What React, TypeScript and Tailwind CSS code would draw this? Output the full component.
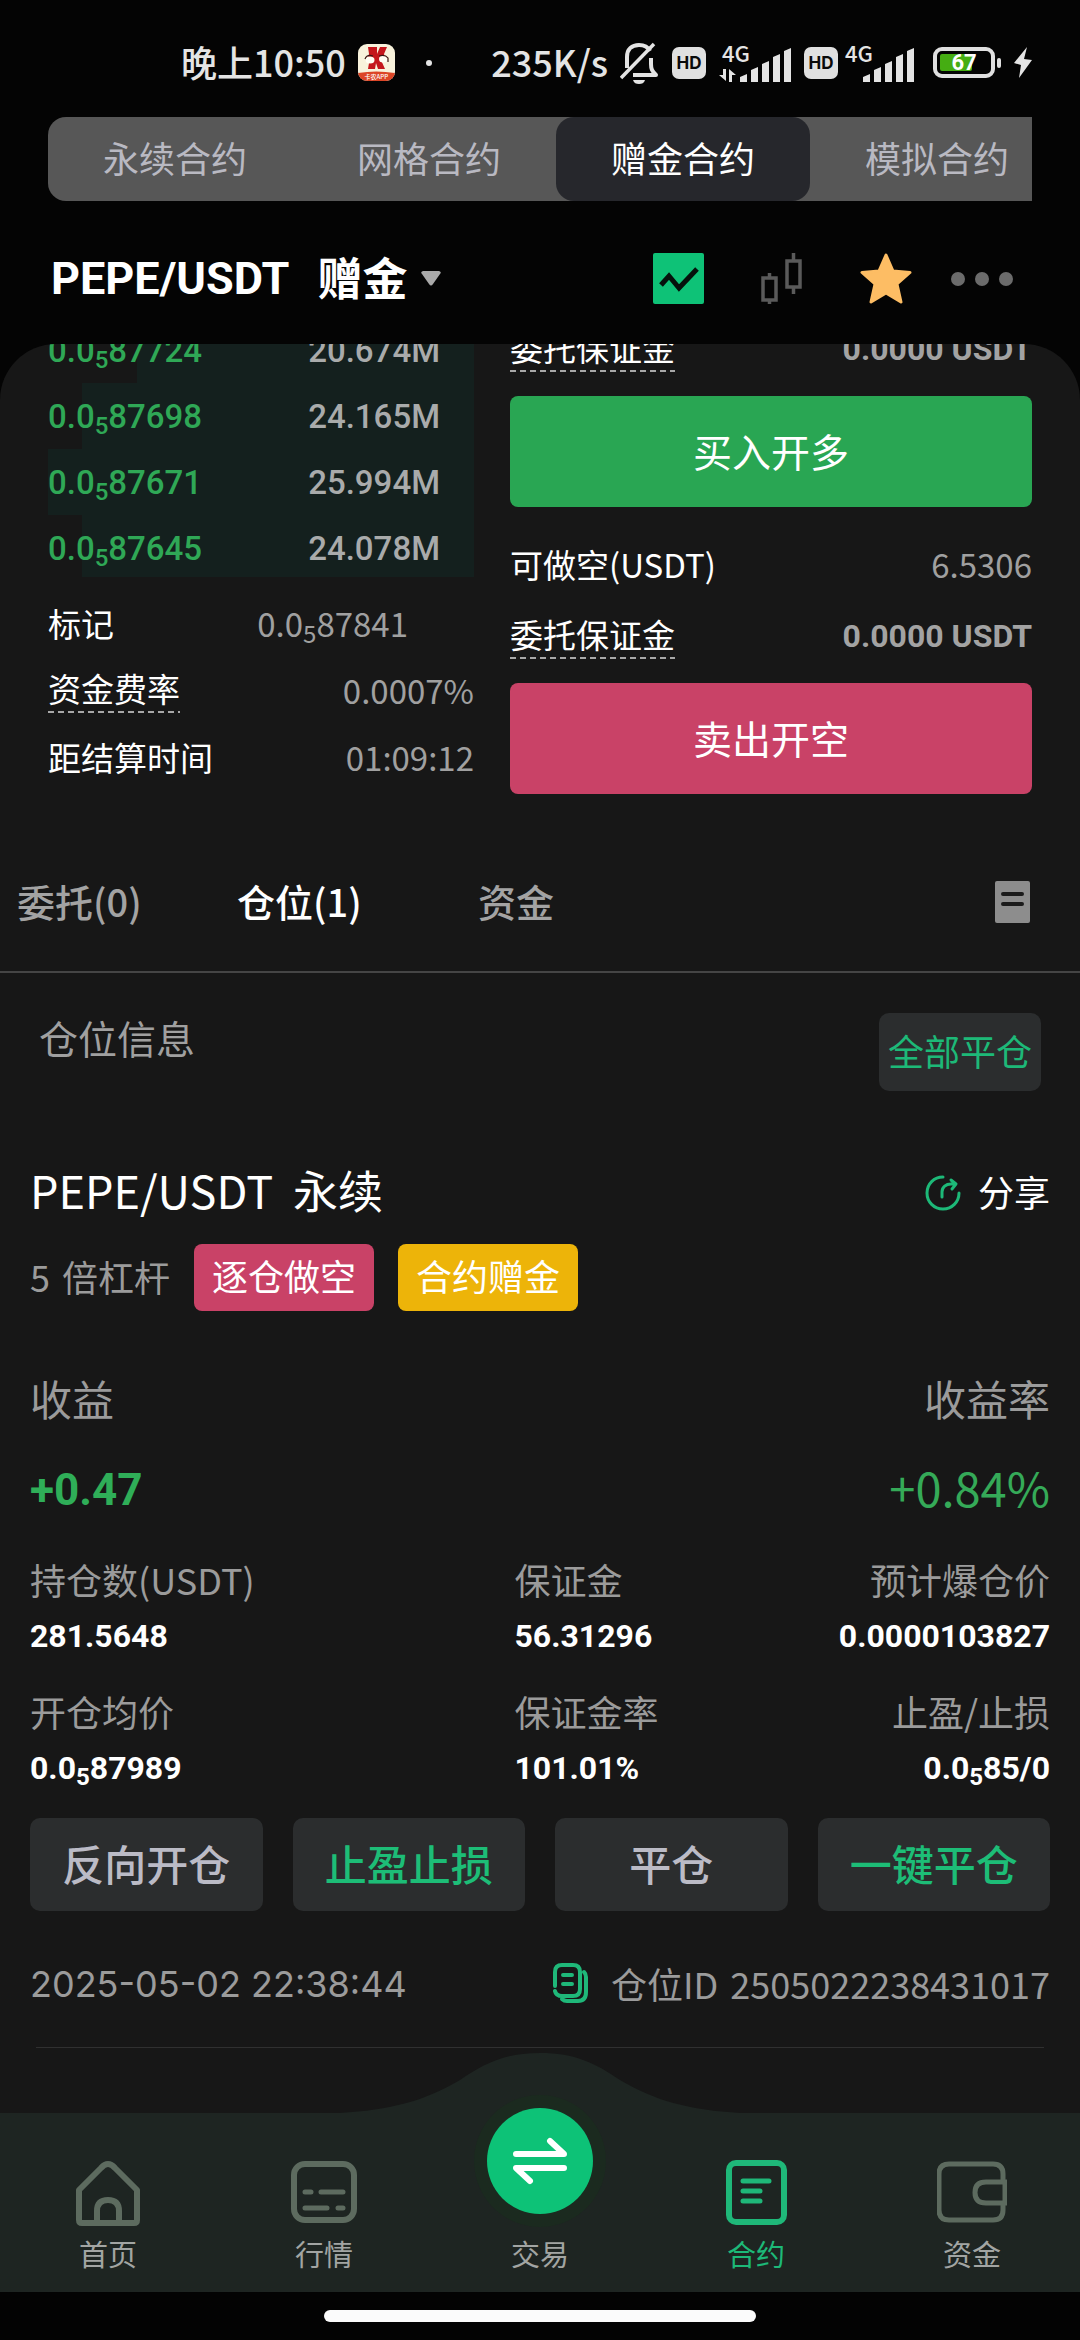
import type { ReactNode } from "react";

const NUM = "font-[Roboto,'Noto_Sans_CJK_SC',sans-serif]";

function SubPrice({ tail }: { tail: string }) {
  return (
    <>
      0.0<sub className="text-[24px]">5</sub>
      {tail}
    </>
  );
}

/* ---------- status bar ---------- */

function AppBadge() {
  return (
    <span className="relative block h-[37px] w-[37px] overflow-hidden rounded-[9px] bg-[#f8f2dc]">
      <svg viewBox="0 0 37 37" className="block h-full w-full" aria-hidden="true">
        <path d="M10 3h9v7l3-7h7l-3 7 1 4-4 2 4 9h-7l-2-6-1 6h-7l1-6-1-5 1-4z" fill="#c4161c" />
        <ellipse cx="12" cy="16" rx="4.500" ry="3.500" fill="#fffdf3" />
        <ellipse cx="25" cy="15" rx="4" ry="3.500" fill="#fffdf3" />
        <path d="M7 15q2-5 8-3M21 12q6-2 9 2v4" stroke="#3a1512" strokeWidth="1.200" fill="none" />
        <path d="M0 29q18-3 37 0v8H0z" fill="#dc4526" />
      </svg>
      <span className="absolute inset-x-0 bottom-0 text-center text-[6px] leading-[9px] text-white">卡农APP</span>
    </span>
  );
}

function BellOff() {
  return (
    <svg viewBox="0 0 38 42" className="h-[42px] w-[38px]" fill="none" stroke="#e4e4e4" strokeWidth="4" strokeLinejoin="round" aria-hidden="true">
      <path d="M7 26V15C7 7 12 3 19 3c5 0 9 2 11 6" />
      <path d="M13 33h23c-4-4-5-6-5-11v-6" />
      <path d="M1 36 34 2" strokeWidth="3.5" />
      <path d="M13 38h12c-1 3-3 4-6 4s-5-1-6-4z" fill="#e4e4e4" stroke="none" />
    </svg>
  );
}

function HdBadge() {
  return (
    <span className="flex h-[32px] w-[34px] items-center justify-center rounded-[7px] bg-[#e0e0e0] font-[Inter,sans-serif] text-[17px] font-bold text-[#0a0a0a]">
      HD
    </span>
  );
}

function Signal({ data }: { data?: boolean }) {
  return data ? (
    <span className="relative block h-[38px] w-[72px]">
      <svg viewBox="0 0 72 38" className="h-full w-full" fill="#e4e4e4" aria-hidden="true">
        <path d="M4 25h3v12L0 31h4zM10 38V25l7 6h-4v7z" />
        <path d="M21 38v-5l7-3v8zM32 38V26l7-3v15zM43 38V20l7-3v21zM54 38V13l7-3v28zM65 38V7l7-3v34z" />
      </svg>
      <span className="absolute left-[3px] top-[-3px] text-[22px] leading-[22px] font-medium">4G</span>
    </span>
  ) : (
    <span className="relative block h-[38px] w-[69px]">
      <svg viewBox="0 0 69 38" className="h-full w-full" fill="#e4e4e4" aria-hidden="true">
        <path d="M18 38v-5l7-3v8zM29 38V26l7-3v15zM40 38V20l7-3v21zM51 38V13l7-3v28zM62 38V7l7-3v34z" />
      </svg>
      <span className="absolute left-0 top-[-3px] text-[22px] leading-[22px] font-medium">4G</span>
    </span>
  );
}

function Battery() {
  return (
    <span className="flex items-center gap-[2px]">
      <span className="relative block h-[31px] w-[62px] rounded-[9px] border-4 border-[#e0e0e0] p-[3px]">
        <span className="block h-full w-[32px] rounded-[2px] bg-[#45ad12]" />
        <span className="absolute inset-0 flex items-center justify-center font-[Roboto,sans-serif] text-[22px] leading-[22px] font-bold text-white">
          67
        </span>
      </span>
      <span className="h-[10px] w-1 rounded-sm bg-[#e0e0e0]" />
    </span>
  );
}

function StatusBar() {
  return (
    <div className="flex h-[117px] items-center justify-between pt-2 pr-[48px] pl-[181px] text-[36px] leading-[36px] font-medium text-[#e4e4e4]">
      <div className="flex items-center">
        <span className="pb-1">晚上10:50</span>
        <span className="ml-3">
          <AppBadge />
        </span>
        <span className="ml-[31px] h-[6px] w-[6px] rounded-full bg-[#e4e4e4]" />
      </div>
      <div className="flex items-center">
        <span className="mr-3 pb-1">235K/s</span>
        <BellOff />
        <span className="ml-[14px]">
          <HdBadge />
        </span>
        <span className="ml-[13px]">
          <Signal data />
        </span>
        <span className="ml-[13px]">
          <HdBadge />
        </span>
        <span className="ml-[7px]">
          <Signal />
        </span>
        <span className="ml-[19px]">
          <Battery />
        </span>
        <svg viewBox="0 0 18 31" className="ml-[13px] h-[31px] w-[18px]" fill="#e4e4e4" aria-hidden="true">
          <path d="M13 0 0 16l7 2-2 13L18 13l-8-1z" />
        </svg>
      </div>
    </div>
  );
}

/* ---------- header ---------- */

function ContractTabs() {
  const tabs = ["永续合约", "网格合约", "赠金合约", "模拟合约"];
  return (
    <div className="mx-12 flex h-[84px] overflow-hidden rounded-l-[18px] bg-[#575757]" role="tablist">
      {tabs.map((t) => (
        <button
          key={t}
          role="tab"
          aria-selected={t === "赠金合约"}
          className="w-[254px] shrink-0 rounded-[18px] pb-1 text-[36px] leading-[48px] text-[#b9b9c2] aria-selected:bg-[#26272c] aria-selected:text-white"
        >
          {t}
        </button>
      ))}
    </div>
  );
}

function TitleRow() {
  return (
    <div className="flex h-[143px] items-center justify-between pt-3 pr-[67px] pl-[51px]">
      <button className="flex items-center text-[45px] leading-[56px] font-bold text-white">
        <span className={NUM}>PEPE/USDT</span>
        <span className="ml-7 pb-1">赠金</span>
        <svg viewBox="0 0 20 15" className="ml-[14px] h-[15px] w-[20px]" aria-hidden="true">
          <path d="M2 0h16q3 1 1 3l-7 10q-2 3-4 0L1 3Q-1 1 2 0z" fill="#a9a9a9" />
        </svg>
      </button>
      <div className="flex items-center">
        <button aria-label="走势图">
          <svg viewBox="0 0 51 51" className="h-[51px] w-[51px]" aria-hidden="true">
            <rect width="51" height="51" rx="2" fill="#0ec277" />
            <path d="m8 32 8-9 10 12 18-19" fill="none" stroke="#05120c" strokeWidth="5" />
          </svg>
        </button>
        <button aria-label="K线图" className="ml-[57px]">
          <svg viewBox="0 0 42 51" className="h-[51px] w-[42px]" fill="none" stroke="#5a5a5a" strokeWidth="3.5" aria-hidden="true">
            <path d="M2 25h13v22H2zM8.500 20v5M8.500 47v4M26 8h13v26H26zM32.500 0v8M32.500 34v7" />
          </svg>
        </button>
        <button aria-label="收藏" className="ml-[57px]">
          <svg viewBox="0 0 52 51" className="h-[51px] w-[52px]" aria-hidden="true">
            <path
              d="M26 2 33 18 50 19.500 37 31 41 49 26 40 11 49 15 31 2 19.500 19 18z"
              fill="#fdbd64"
              stroke="#fdbd64"
              strokeWidth="3"
              strokeLinejoin="round"
            />
          </svg>
        </button>
        <button aria-label="更多" className="ml-[39px] flex gap-[10px]">
          <span className="h-[14px] w-[14px] rounded-full bg-[#6b6b6b]" />
          <span className="h-[14px] w-[14px] rounded-full bg-[#6b6b6b]" />
          <span className="h-[14px] w-[14px] rounded-full bg-[#6b6b6b]" />
        </button>
      </div>
    </div>
  );
}

/* ---------- order book and order form ---------- */

const bids = [
  { tail: "87724", amount: "20.674M", depth: 79 },
  { tail: "87698", amount: "24.165M", depth: 92 },
  { tail: "87671", amount: "25.994M", depth: 100 },
  { tail: "87645", amount: "24.078M", depth: 92 },
];

function OrderBook() {
  return (
    <div className="flex-[426]">
      <ul className={`h-[260px] overflow-hidden text-[33px] font-medium ${NUM}`}>
        {bids.map((b) => (
          <li key={b.tail} className="relative h-[66px]">
            <div className="absolute inset-y-0 right-0 bg-[#14201e]" style={{ width: `${b.depth}%` }} />
            <div className="relative flex h-full items-center justify-between pt-[2px] pr-[34px]">
              <span className="text-[#2fa856]">
                <SubPrice tail={b.tail} />
              </span>
              <span className="text-[#a9abab]">{b.amount}</span>
            </div>
          </li>
        ))}
      </ul>
      <dl className="pt-3 text-[33px] leading-[42px] text-white">
        <div className="flex h-[67px] items-center justify-between">
          <dt>标记</dt>
          <dd className="pr-[66px] text-[#a0a0a0]">
            <SubPrice tail="87841" />
          </dd>
        </div>
        <div className="flex h-[67px] items-center justify-between">
          <dt>
            <DashedLabel>资金费率</DashedLabel>
          </dt>
          <dd className="text-[#a0a0a0]">0.0007%</dd>
        </div>
        <div className="flex h-[67px] items-center justify-between">
          <dt>距结算时间</dt>
          <dd className="text-[#a0a0a0]">01:09:12</dd>
        </div>
      </dl>
    </div>
  );
}

function DashedLabel({ children }: { children: ReactNode }) {
  return (
    <span className="relative mb-[3px] inline-block">
      {children}
      <svg className="absolute inset-x-0 -bottom-1 h-[2px] w-full" aria-hidden="true">
        <line x1="0" y1="1" x2="100%" y2="1" stroke="#a8a8a8" strokeWidth="2" strokeDasharray="6 4" />
      </svg>
    </span>
  );
}

function MarginRow() {
  return (
    <div className="mb-4 flex h-[63px] items-center justify-between">
      <DashedLabel>委托保证金</DashedLabel>
      <span className={`text-[32px] font-bold text-[#a3a3a3] ${NUM}`}>0.0000 USDT</span>
    </div>
  );
}

function OrderForm() {
  return (
    <div className="flex-[522] text-[33px] leading-[42px] text-white">
      <MarginRow />
      <button className="block h-[111px] w-full rounded-lg bg-[#29a653] pb-1 text-[39px]">买入开多</button>
      <div className="mt-4 mb-2 flex h-[73px] items-center justify-between pt-2">
        <span>可做空(USDT)</span>
        <span className="text-[#a0a0a0]">6.5306</span>
      </div>
      <MarginRow />
      <button className="block h-[111px] w-full rounded-lg bg-[#c94267] pb-1 text-[39px]">卖出开空</button>
    </div>
  );
}

function SectionTabs() {
  return (
    <div className="mt-10 flex h-[139px] items-center justify-between border-b-2 border-[#454545] pr-[50px] pl-[17px]">
      <div className="flex pb-1 text-[38px] leading-[56px] font-medium text-[#a3a3a3]" role="tablist">
        <button role="tab" aria-selected="false" className="w-[220px] text-left">
          委托(0)
        </button>
        <button role="tab" aria-selected="true" className="w-[241px] text-left text-white">
          仓位(1)
        </button>
        <button role="tab" aria-selected="false" className="text-left">
          资金
        </button>
      </div>
      <button aria-label="历史记录" className="pb-[2px]">
        <svg viewBox="0 0 35 42" className="h-[42px] w-[35px]" aria-hidden="true">
          <rect width="35" height="42" rx="2" fill="#8d8d8d" />
          <path d="M8 13h19M8 23h19" stroke="#1b1b1b" strokeWidth="4" strokeLinecap="round" />
        </svg>
      </button>
    </div>
  );
}

/* ---------- position card ---------- */

const stats: { label: string; value: ReactNode }[] = [
  { label: "持仓数(USDT)", value: "281.5648" },
  { label: "保证金", value: "56.31296" },
  { label: "预计爆仓价", value: "0.0000103827" },
  { label: "开仓均价", value: <SubPrice tail="87989" /> },
  { label: "保证金率", value: "101.01%" },
  { label: "止盈/止损", value: <SubPrice tail="85/0" /> },
];

const actions = [
  { label: "反向开仓", accent: false },
  { label: "止盈止损", accent: true },
  { label: "平仓", accent: false },
  { label: "一键平仓", accent: true },
];

function Position() {
  return (
    <article className="mx-[30px] mt-[72px] text-[36px] leading-[54px] text-[#9b9b9b]">
      <div className="flex h-[60px] items-center justify-between text-white">
        <h2 className="flex gap-5 pb-[6px] text-[45px] leading-[54px]">
          <span>PEPE/USDT</span>
          <span>永续</span>
        </h2>
        <button className="flex items-center gap-[17px]">
          <svg viewBox="0 0 36 36" className="h-[36px] w-[36px]" fill="none" stroke="#1db978" strokeWidth="3" strokeLinecap="round" strokeLinejoin="round" aria-hidden="true">
            <path d="M18 2C9 2 2 9 2 18s7 16 16 16 16-7 16-16" />
            <path d="M17 22v-5c0-5 4-8 9-8h4M26 5l5 4-4 5" />
          </svg>
          <span className="pb-1">分享</span>
        </button>
      </div>

      <div className="mt-[21px] flex h-[67px] items-center gap-6">
        <span className="flex gap-3 pb-1">
          <span>5</span>
          <span>倍杠杆</span>
        </span>
        <span className="h-[67px] rounded-lg bg-[#c94267] px-[18px] pt-1 text-white">逐仓做空</span>
        <span className="h-[67px] rounded-lg bg-[#edb409] px-[18px] pt-1 text-white">合约赠金</span>
      </div>

      <dl className="mt-[57px] flex justify-between">
        <div>
          <dt className="text-[42px] leading-[60px]">收益</dt>
          <dd className={`mt-8 text-[44px] leading-[60px] font-bold text-[#2fae58] ${NUM}`}>+0.47</dd>
        </div>
        <div className="text-right">
          <dt className="text-[42px] leading-[60px]">收益率</dt>
          <dd className="mt-[29px] text-[47px] leading-[60px] text-[#35aa58]">+0.84%</dd>
        </div>
      </dl>

      <dl className="mt-8 grid grid-cols-[19fr_9fr_12fr] gap-y-[18px]">
        {stats.map((s, i) => (
          <div key={s.label} className={i % 3 === 2 ? "text-right" : ""}>
            <dt>{s.label}</dt>
            <dd className={`text-[32px] leading-[60px] font-bold text-white ${NUM}`}>{s.value}</dd>
          </div>
        ))}
      </dl>

      <div className="mt-5 grid grid-cols-4 gap-[30px] text-[42px] font-medium">
        {actions.map((a) => (
          <button
            key={a.label}
            className={`h-[93px] rounded-[10px] bg-[#2b2d2e] pb-1 ${a.accent ? "text-[#1dbd77]" : "text-[#bbbbc6]"}`}
          >
            {a.label}
          </button>
        ))}
      </div>

      <div className="mt-[44px] flex items-center justify-between">
        <time className="pt-[2px] font-[Inter,sans-serif]">2025-05-02 22:38:44</time>
        <button className="flex items-center gap-[23px]">
          <svg viewBox="0 0 35 40" className="h-[40px] w-[35px]" fill="none" stroke="#1fb879" strokeWidth="4" strokeLinecap="round" aria-hidden="true">
            <path d="M2 23V9q0-7 7-7h11q7 0 7 7v17q0 7-7 7H9q-6 0-7-5" />
            <path d="M10 12h9M10 21h9" />
            <path d="M31 9q2 2 2 5v15q0 9-8 9H14q-3 0-5-2" />
          </svg>
          <span className="flex gap-3">
            <span>仓位ID</span>
            <span>2505022238431017</span>
          </span>
        </button>
      </div>
      <hr className="mx-[6px] mt-9 border-[#303030]" />
    </article>
  );
}

/* ---------- bottom navigation ---------- */

const ICON = "#5d6b5f";

function NavItem({ label, active, children }: { label: string; active?: boolean; children: ReactNode }) {
  return (
    <a
      href="#"
      aria-current={active ? "page" : undefined}
      className="flex flex-1 flex-col items-center text-[#a2a5a3] aria-[current]:text-[#1db978]"
    >
      {children}
      {label}
    </a>
  );
}

function BottomNav() {
  return (
    <nav className="relative -mt-[60px]">
      <svg viewBox="0 0 400 60" className="mx-auto block h-[60px] w-[400px]" aria-hidden="true">
        <path d="M0 60C50 57 85 48 120 27C145 10 165 0 200 0S255 10 280 27C315 48 350 57 400 60z" fill="#1e2522" />
      </svg>
      <div className="flex h-[179px] bg-[#1e2522] text-[29px] leading-[40px]">
        <NavItem label="首页">
          <svg viewBox="0 0 66 66" className="mt-[47px] mb-[7px] h-[66px] w-[66px]" fill="none" stroke={ICON} strokeWidth="6" strokeLinejoin="round" aria-hidden="true">
            <path d="M4 30 26 8q7-8 14 0l22 22v30q0 3-3 3H7q-3 0-3-3zM22 63V51q0-11 11-11t11 11v12" />
          </svg>
        </NavItem>
        <NavItem label="行情">
          <svg viewBox="0 0 66 66" className="mt-[47px] mb-[7px] h-[66px] w-[66px]" fill="none" stroke={ICON} strokeWidth="5" strokeLinecap="round" aria-hidden="true">
            <rect x="3" y="4" width="60" height="56" rx="11" strokeWidth="6" />
            <path d="M14 32h6M30 32h22M14 48h22M47 48h5" />
          </svg>
        </NavItem>
        <NavItem label="交易">
          <span className="-mt-[18px] mb-[6px] flex h-[132px] w-[132px] items-center justify-center rounded-full bg-[#1b2a1f]">
            <span className="flex h-[106px] w-[106px] items-center justify-center rounded-full bg-[#0dc277]">
              <svg viewBox="0 0 56 48" className="h-[48px] w-[56px]" fill="none" stroke="#fff" strokeWidth="6" strokeLinecap="round" strokeLinejoin="round" aria-hidden="true">
                <path d="M4 17h48L38 4M52 31H4l14 13" />
              </svg>
            </span>
          </span>
        </NavItem>
        <NavItem label="合约" active>
          <svg viewBox="0 0 66 66" className="mt-[47px] mb-[7px] h-[66px] w-[66px]" fill="none" stroke="#1fb879" strokeWidth="5" strokeLinecap="round" aria-hidden="true">
            <rect x="6" y="3" width="55" height="59" rx="7" strokeWidth="6" />
            <path d="M20 21h26M20 31h17M20 41h17" />
          </svg>
        </NavItem>
        <NavItem label="资金">
          <svg viewBox="0 0 70 66" className="mt-[47px] mb-[7px] h-[66px] w-[70px]" fill="none" stroke={ICON} strokeWidth="5" aria-hidden="true">
            <path d="M66 22v-8q0-10-10-10H12Q2 4 2 14v36q0 10 10 10h44q10 0 10-10v-7" />
            <path d="M68 22H49q-11 0-11 10.500T49 43h19z" />
          </svg>
        </NavItem>
      </div>
      <div className="flex h-12 items-center justify-center bg-[#030303]">
        <span className="h-3 w-2/5 rounded-full bg-[#fbfbfb]" />
      </div>
    </nav>
  );
}

export default function App() {
  return (
    <div className="flex min-h-screen flex-col bg-[#040404] font-['Noto_Sans_CJK_SC',sans-serif]">
      <header>
        <StatusBar />
        <ContractTabs />
        <TitleRow />
      </header>
      <main className="flex-1 overflow-hidden rounded-t-[56px] bg-[#171717] pb-[65px]">
        <section className="-mt-[27px] flex gap-9 px-12">
          <OrderBook />
          <OrderForm />
        </section>
        <SectionTabs />
        <div className="flex items-start justify-between pt-10 pr-[39px] pl-[39px]">
          <h1 className="text-[39px] leading-[48px] text-[#a0a0a0]">仓位信息</h1>
          <button className="h-[78px] rounded-[10px] bg-[#2b2d2e] px-[9px] pb-1 text-[36px] leading-[54px] text-[#1db978]">
            全部平仓
          </button>
        </div>
        <Position />
      </main>
      <BottomNav />
    </div>
  );
}
